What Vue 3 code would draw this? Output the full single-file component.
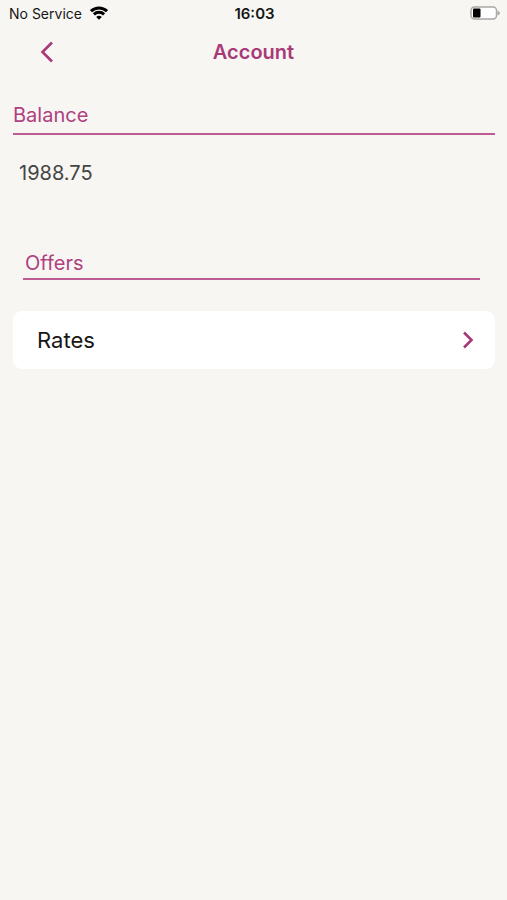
<script setup>
const carrier = 'No Service'
const time = '16:03'
const balance = '1988.75'
</script>

<template>
  <div class="screen">
    <div class="status">
      <div class="carrier">
        <span>{{ carrier }}</span>
        <svg class="wifi" viewBox="0 0 18 14" aria-hidden="true">
          <path d="M1 5.2 A11.5 11.5 0 0 1 17 5.2" />
          <path d="M3.9 8.4 A7.4 7.4 0 0 1 14.1 8.4" />
          <path class="dot" d="M9 13.8 L6.2 11 A4 4 0 0 1 11.8 11 Z" />
        </svg>
      </div>
      <time class="time">{{ time }}</time>
      <svg class="battery" viewBox="0 0 30 14" aria-hidden="true">
        <rect class="shell" x="1" y="1" width="25.5" height="12" rx="3.5" />
        <rect x="3" y="2.5" width="7.5" height="9" rx="1" />
        <path class="cap" d="M27.5 4.5 Q30 5.5 30 7 T27.5 9.5 Z" />
      </svg>
    </div>

    <header class="bar">
      <button class="back" type="button" aria-label="Back">
        <svg viewBox="0 0 14 22" aria-hidden="true"><path d="M12 1.5 L2.5 11 L12 20.5" /></svg>
      </button>
      <h1>Account</h1>
    </header>

    <main>
      <section class="balance">
        <h2>Balance</h2>
        <p>{{ balance }}</p>
      </section>
      <section class="offers">
        <h2>Offers</h2>
      </section>
      <a class="row" href="#rates">
        <span>Rates</span>
        <svg viewBox="0 0 12 18" aria-hidden="true"><path d="M2 1.5 L9.5 9 L2 16.5" /></svg>
      </a>
    </main>
  </div>
</template>

<style>
body {
  margin: 0;
  background: #f7f6f3;
}
</style>

<style scoped>
.screen {
  min-height: 100vh;
  background: #f7f6f3;
  color: #161616;
  font-family: Inter, "Liberation Sans", sans-serif;
}
.status {
  display: grid;
  grid-template-columns: 1fr auto 1fr;
  align-items: center;
  height: 26px;
  padding: 0 7px 0 9px;
  font-size: 14px;
}
.carrier {
  display: flex;
  align-items: center;
  gap: 8px;
}
.wifi {
  width: 18px;
  height: 14px;
  fill: none;
  stroke: #000;
  stroke-width: 3;
}
.wifi .dot {
  fill: #000;
  stroke: none;
}
.time {
  font-size: 15px;
  font-weight: 600;
}
.battery {
  width: 30px;
  height: 14px;
  justify-self: end;
}
.shell {
  fill: #fff;
  stroke: #a9a8a6;
  stroke-width: 1.5;
}
.cap {
  fill: #a9a8a6;
}
.bar {
  display: grid;
  grid-template-columns: 1fr auto 1fr;
  align-items: center;
  height: 52px;
  padding: 0 32px;
}
.back {
  display: flex;
  justify-self: start;
  padding: 8px;
  border: 0;
  background: none;
}
.back svg {
  width: 14px;
  height: 22px;
}
.back path,
.row path {
  fill: none;
  stroke: #a83a78;
  stroke-width: 2.6;
}
h1,
h2,
p {
  margin: 0;
}
h1 {
  color: #a83a78;
  font-size: 20px;
  font-weight: 600;
}
main {
  padding: 22px 12px 0 13px;
}
h2 {
  border-bottom: 2px solid #bd5c92;
  color: #b0407f;
  font-size: 20px;
  font-weight: 400;
  line-height: 30px;
}
.balance h2 {
  padding-bottom: 3px;
}
.balance p {
  padding: 23px 6px 22px;
  color: #444;
  font-size: 20px;
  line-height: 30px;
}
.offers {
  padding: 38px 15px 31px 10px;
}
.offers h2 {
  padding-left: 2px;
}
.row {
  display: flex;
  align-items: center;
  justify-content: space-between;
  height: 58px;
  padding: 0 21px 0 24px;
  border-radius: 9px;
  background: #fff;
  color: #161616;
  font-size: 22px;
  text-decoration: none;
}
.row svg {
  width: 12px;
  height: 18px;
}
</style>
